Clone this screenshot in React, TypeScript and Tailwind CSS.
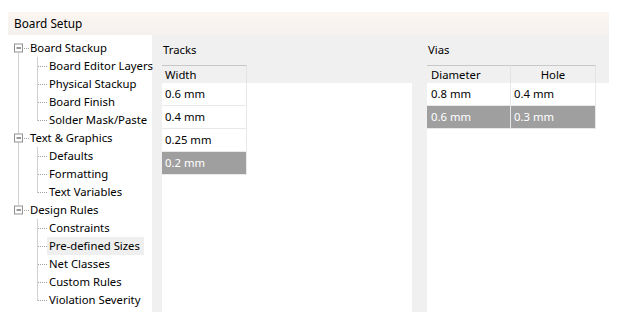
import React from "react";

const font = { fontFamily: '"Noto Sans", "Open Sans", sans-serif' };

type Node = { label: string; root?: boolean; hl?: boolean };
const tree: Node[] = [
  { label: "Board Stackup", root: true },
  { label: "Board Editor Layers" },
  { label: "Physical Stackup" },
  { label: "Board Finish" },
  { label: "Solder Mask/Paste" },
  { label: "Text & Graphics", root: true },
  { label: "Defaults" },
  { label: "Formatting" },
  { label: "Text Variables" },
  { label: "Design Rules", root: true },
  { label: "Constraints" },
  { label: "Pre-defined Sizes", hl: true },
  { label: "Net Classes" },
  { label: "Custom Rules" },
  { label: "Violation Severity" },
];

function TreeLines() {
  const c = (i: number) => 13 + i * 18 + 0.5;
  const dots = "#a0a0a0";
  const roots = [0, 5, 9];
  const groups = [
    [0, 4],
    [5, 8],
    [9, 14],
  ];
  return (
    <svg className="absolute left-0 top-0" width="144" height="277">
      <line x1="10.5" y1={c(0) + 5} x2="10.5" y2={c(9) - 5} stroke={dots} strokeDasharray="1 1" />
      {groups.map(([p, last], gi) => (
        <g key={gi}>
          <line x1="29.5" y1={c(p) + 9} x2="29.5" y2={c(last)} stroke={dots} strokeDasharray="1 1" />
          {Array.from({ length: last - p }, (_, k) => p + 1 + k).map((i) => (
            <line key={i} x1="30" y1={c(i)} x2="39" y2={c(i)} stroke={dots} strokeDasharray="1 1" />
          ))}
        </g>
      ))}
      {roots.map((r) => (
        <g key={r}>
          <rect x="6.5" y={c(r) - 4.5} width="8" height="8" fill="#fff" stroke="#919191" />
          <line x1="8.5" y1={c(r) - 0.5} x2="13" y2={c(r) - 0.5} stroke="#333" />
          <line x1="16" y1={c(r)} x2="21" y2={c(r)} stroke={dots} strokeDasharray="1 1" />
        </g>
      ))}
    </svg>
  );
}

export default function App() {
  return (
    <div className="w-[620px] h-[330px] bg-white pt-[12px] pl-[8px] text-[11.3px] text-black whitespace-nowrap" style={font}>
      <div className="w-[601px]">
        <div className="h-[23px] flex items-center pl-[6px] text-[11.8px] bg-gradient-to-b from-[#fcf5f0] to-[#f4f1ef]">
          Board Setup
        </div>
        <div className="flex h-[277px]">
          <div className="relative w-[144px] bg-white pt-[4px]">
            <TreeLines />
            {tree.map((n, i) => (
              <div key={i} className={`relative h-[18px] flex items-center ${n.root ? "pl-[20px]" : "pl-[39px]"}`}>
                <span className={`px-[2px] leading-[18px] ${n.hl ? "bg-[#efefef] pr-[4px]" : ""}`}>{n.label}</span>
              </div>
            ))}
          </div>
          <div className="flex-1 bg-[#f0f0f0] flex pl-[10px]">
            <div className="w-[250px] flex flex-col">
              <div className="h-[30px] flex items-center pl-[1px]">Tracks</div>
              <div className="h-[18px] flex">
                <div className="w-[85px] border-t border-[#c8c8c8] border-r border-r-[#e4e4e4] pl-[3px] leading-[17px]">Width</div>
              </div>
              <div className="flex-1 bg-white">
                {["0.6 mm", "0.4 mm", "0.25 mm", "0.2 mm"].map((v, i) => (
                  <div
                    key={v}
                    className={`w-[85px] h-[23px] flex items-center pl-[3px] border-b border-r ${
                      i === 3 ? "bg-[#a09fa0] text-white border-[#e8e8e8]" : "border-[#e8e8e8]"
                    }`}
                  >
                    {v}
                  </div>
                ))}
              </div>
            </div>
            <div className="w-[15px]" />
            <div className="flex-1 flex flex-col">
              <div className="h-[30px] flex items-center pl-[1px]">Vias</div>
              <div className="h-[18px] flex">
                <div className="w-[84px] border-t border-[#c8c8c8] border-r border-r-[#e4e4e4] pl-[4px] leading-[17px]">Diameter</div>
                <div className="w-[85px] border-t border-[#c8c8c8] border-r border-r-[#e4e4e4] text-center leading-[17px]">Hole</div>
              </div>
              <div className="flex-1 bg-white">
                {[
                  ["0.8 mm", "0.4 mm"],
                  ["0.6 mm", "0.3 mm"],
                ].map((r, i) => (
                  <div key={i} className={`flex w-[169px] h-[23px] ${i === 1 ? "bg-[#a09fa0] text-white" : ""}`}>
                    <div className="w-[84px] flex items-center pl-[4px] border-b border-r border-[#e8e8e8]">{r[0]}</div>
                    <div className="w-[85px] flex items-center pl-[3px] border-b border-r border-[#e8e8e8]">{r[1]}</div>
                  </div>
                ))}
              </div>
            </div>
          </div>
        </div>
      </div>
    </div>
  );
}
